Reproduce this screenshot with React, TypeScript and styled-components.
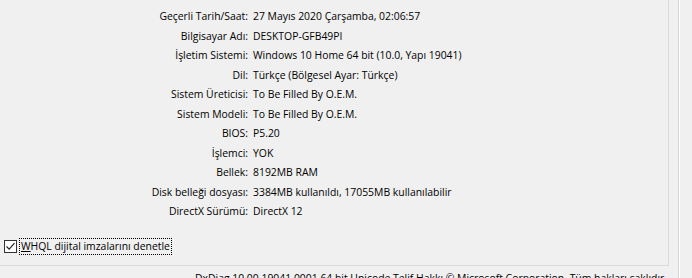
import React from "react";
import styled, { createGlobalStyle } from "styled-components";

const Global = createGlobalStyle`
  html, body { margin: 0; padding: 0; background: #f0f0f0; }
  body { overflow: hidden; }
`;

const Window = styled.div`
  width: 692px;
  height: 278px;
  overflow: hidden;
  display: flex;
  background: #f0f0f0;
  font-family: "Open Sans", "Noto Sans", sans-serif;
  font-size: 10.4px;
  color: #000;
`;

const LeftCol = styled.div`
  width: 679px;
  display: flex;
  flex-direction: column;
`;

const EdgeStrip = styled.div`
  width: 13px;
  border-left: 1px solid #d4d4d4;
  box-shadow: inset 1px 0 0 #ffffff;
`;

const Panel = styled.div`
  box-sizing: border-box;
  flex-shrink: 0;
  width: 669px;
  height: 266px;
  border-right: 1px solid #dadada;
  border-bottom: 1px solid #dadada;
  padding-top: 7px;
  display: flex;
  flex-direction: column;
`;

const InfoGrid = styled.div`
  display: grid;
  grid-template-columns: 248px 1fr;
  grid-auto-rows: 19.5px;
  column-gap: 5px;
  line-height: 19.5px;
`;

const Label = styled.div`
  text-align: right;
  white-space: nowrap;
`;

const Value = styled.div`
  white-space: nowrap;
`;

const CheckRow = styled.label`
  margin-top: 17px;
  margin-left: 4px;
  display: flex;
  align-items: center;
  gap: 3px;
  height: 16px;
`;

const Box = styled.span`
  box-sizing: border-box;
  width: 13px;
  height: 13px;
  border: 1px solid #333;
  background: #fff;
  display: flex;
  align-items: center;
  justify-content: center;
`;

const FocusLabel = styled.span`
  outline: 1px dotted #000;
  outline-offset: 0;
  padding: 0 1px;
  line-height: 15px;
  white-space: nowrap;
`;

const Accel = styled.span`
  text-decoration: underline;
`;

const Footer = styled.div`
  flex-shrink: 0;
  padding-top: 5px;
  padding-left: 195px;
  line-height: 15px;
  white-space: nowrap;
`;

const rows: [string, string][] = [
  ["Geçerli Tarih/Saat:", "27 Mayıs 2020 Çarşamba, 02:06:57"],
  ["Bilgisayar Adı:", "DESKTOP-GFB49PI"],
  ["İşletim Sistemi:", "Windows 10 Home 64 bit (10.0, Yapı 19041)"],
  ["Dil:", "Türkçe (Bölgesel Ayar: Türkçe)"],
  ["Sistem Üreticisi:", "To Be Filled By O.E.M."],
  ["Sistem Modeli:", "To Be Filled By O.E.M."],
  ["BIOS:", "P5.20"],
  ["İşlemci:", "YOK"],
  ["Bellek:", "8192MB RAM"],
  ["Disk belleği dosyası:", "3384MB kullanıldı, 17055MB kullanılabilir"],
  ["DirectX Sürümü:", "DirectX 12"],
];

export default function App() {
  return (
    <>
      <Global />
      <Window>
        <LeftCol>
          <Panel>
            <InfoGrid>
              {rows.map(([l, v]) => (
                <React.Fragment key={l}>
                  <Label>{l}</Label>
                  <Value>{v}</Value>
                </React.Fragment>
              ))}
            </InfoGrid>
            <CheckRow>
              <Box>
                <svg width="11" height="11" viewBox="0 0 11 11">
                  <path d="M1.5 5.5 L4.2 8.2 L9.5 2.2" fill="none" stroke="#222" strokeWidth="1.2" />
                </svg>
              </Box>
              <FocusLabel>
                <Accel>W</Accel>HQL dijital imzalarını denetle
              </FocusLabel>
            </CheckRow>
          </Panel>
          <Footer>
            DxDiag 10.00.19041.0001 64 bit Unicode Telif Hakkı © Microsoft Corporation. Tüm hakları saklıdır.
          </Footer>
        </LeftCol>
        <EdgeStrip />
      </Window>
    </>
  );
}
